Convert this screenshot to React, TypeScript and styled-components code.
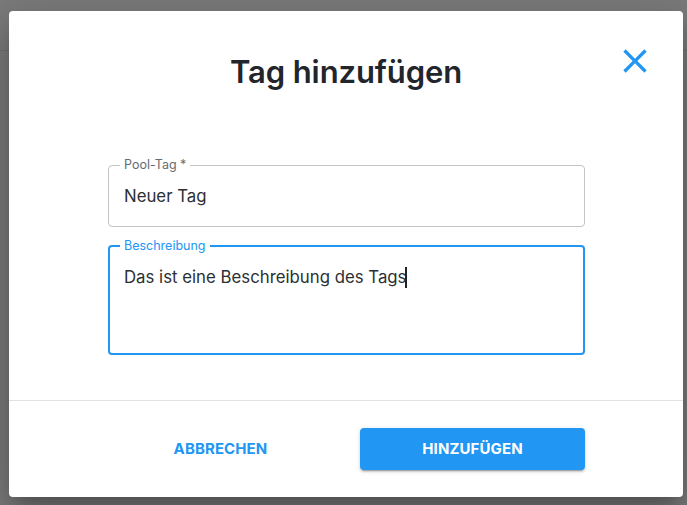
import React, { FC } from 'react';
import styled, { createGlobalStyle } from 'styled-components';

const GlobalStyle = createGlobalStyle`
  html, body {
    margin: 0;
    padding: 0;
    height: 100%;
  }
  body {
    font-family: Inter, "Noto Sans", "Liberation Sans", sans-serif;
    background: #7a7a7a;
  }
  #root {
    height: 100%;
  }
`;

const PageStyled = styled.div`
  position: relative;
  width: 687px;
  height: 505px;
  overflow: hidden;
  background: #7b7b7b;
`;

const AppBarLine = styled.div`
  height: 50px;
  border-bottom: 1px solid #6f6f6f;
`;

const DialogStyled = styled.div`
  position: absolute;
  left: 9px;
  top: 11px;
  width: 674px;
  height: 486px;
  background: #fff;
  border-radius: 4px;
  box-shadow: 0 11px 15px -7px rgba(0, 0, 0, 0.2), 0 24px 38px 3px rgba(0, 0, 0, 0.14),
    0 9px 46px 8px rgba(0, 0, 0, 0.12);
  display: flex;
  flex-direction: column;
  box-sizing: border-box;
`;

const HeaderStyled = styled.div`
  display: grid;
  grid-template-columns: 1fr auto 1fr;
  align-items: start;
  padding: 41px 24px 0 24px;
`;

const TitleStyled = styled.h2`
  grid-column: 2;
  margin: 0;
  font-size: 31px;
  line-height: 40px;
  font-weight: 600;
  color: #22252b;
  letter-spacing: -0.1px;
`;

const CloseButton = styled.button`
  grid-column: 3;
  justify-self: end;
  margin-top: -15px;
  margin-right: 0;
  width: 48px;
  height: 48px;
  border: 0;
  background: transparent;
  padding: 0;
  display: flex;
  align-items: center;
  justify-content: center;
  color: #2196f3;
  cursor: pointer;
`;

const BodyStyled = styled.div`
  flex: 1;
  display: flex;
  flex-direction: column;
  gap: 12px;
  padding: 66px 98px 0 99px;
`;

const FieldStyled = styled.fieldset<{ $focused?: boolean }>`
  margin: 0;
  padding: 0;
  min-width: 0;
  border: ${(p) => (p.$focused ? '2px solid #2196f3' : '1px solid #c4c4c4')};
  border-radius: 4px;
`;

const LegendStyled = styled.legend<{ $focused?: boolean }>`
  margin-left: ${(p) => (p.$focused ? 10 : 11)}px;
  padding: 0 4px;
  font-size: 12.5px;
  line-height: 14px;
  color: ${(p) => (p.$focused ? '#2196f3' : '#666b70')};
`;

const ValueStyled = styled.div<{ $multiline?: boolean; $height: number }>`
  height: ${(p) => p.$height}px;
  box-sizing: border-box;
  display: flex;
  align-items: ${(p) => (p.$multiline ? 'flex-start' : 'center')};
  padding: ${(p) => (p.$multiline ? '12px 14px 0 14px' : '0 15px 7px 15px')};
  font-size: 16.8px;
  line-height: 24px;
  color: #2b2f33;
`;

const Caret = styled.span`
  display: inline-block;
  width: 2px;
  height: 21px;
  background: #1f2226;
  vertical-align: -5px;
  margin-left: -1px;
`;

const FooterStyled = styled.div`
  border-top: 1px solid #e2e2e2;
  padding: 27px 98px 27px 99px;
  display: grid;
  grid-template-columns: 1fr 1fr;
  gap: 27px;
`;

const ButtonStyled = styled.button<{ $primary?: boolean }>`
  height: 42px;
  border: 0;
  border-radius: 4px;
  font-family: Inter, "Liberation Sans", sans-serif;
  font-size: 15px;
  font-weight: 700;
  letter-spacing: 0.1px;
  text-transform: uppercase;
  cursor: pointer;
  padding-bottom: 2px;
  background: ${(p) => (p.$primary ? '#2196f3' : 'transparent')};
  color: ${(p) => (p.$primary ? '#fff' : '#2196f3')};
  box-shadow: ${(p) =>
    p.$primary
      ? '0 3px 1px -2px rgba(0,0,0,0.2), 0 2px 2px 0 rgba(0,0,0,0.14), 0 1px 5px 0 rgba(0,0,0,0.12)'
      : 'none'};
`;

const CloseIcon: FC = () => (
  <svg width="40" height="40" viewBox="0 0 24 24" fill="currentColor">
    <path d="M19 6.41 17.59 5 12 10.59 6.41 5 5 6.41 10.59 12 5 17.59 6.41 19 12 13.41 17.59 19 19 17.59 13.41 12z" />
  </svg>
);

interface FieldProps {
  label: string;
  height: number;
  focused?: boolean;
  multiline?: boolean;
  children: React.ReactNode;
}

const Field: FC<FieldProps> = (props) => {
  const { label, height, focused, multiline, children } = props;
  return (
    <FieldStyled $focused={focused}>
      <LegendStyled $focused={focused}>{label}</LegendStyled>
      <ValueStyled $multiline={multiline} $height={height}>
        <span>{children}</span>
      </ValueStyled>
    </FieldStyled>
  );
};

export default function App() {
  return (
    <PageStyled>
      <GlobalStyle />
      <AppBarLine />
      <DialogStyled>
        <HeaderStyled>
          <TitleStyled>Tag hinzufügen</TitleStyled>
          <CloseButton aria-label="Schließen">
            <CloseIcon />
          </CloseButton>
        </HeaderStyled>
        <BodyStyled>
          <Field label="Pool-Tag *" height={54}>
            Neuer Tag
          </Field>
          <Field label="Beschreibung" height={100} focused multiline>
            Das ist eine Beschreibung des Tags
            <Caret />
          </Field>
        </BodyStyled>
        <FooterStyled>
          <ButtonStyled>Abbrechen</ButtonStyled>
          <ButtonStyled $primary>Hinzufügen</ButtonStyled>
        </FooterStyled>
      </DialogStyled>
    </PageStyled>
  );
}
